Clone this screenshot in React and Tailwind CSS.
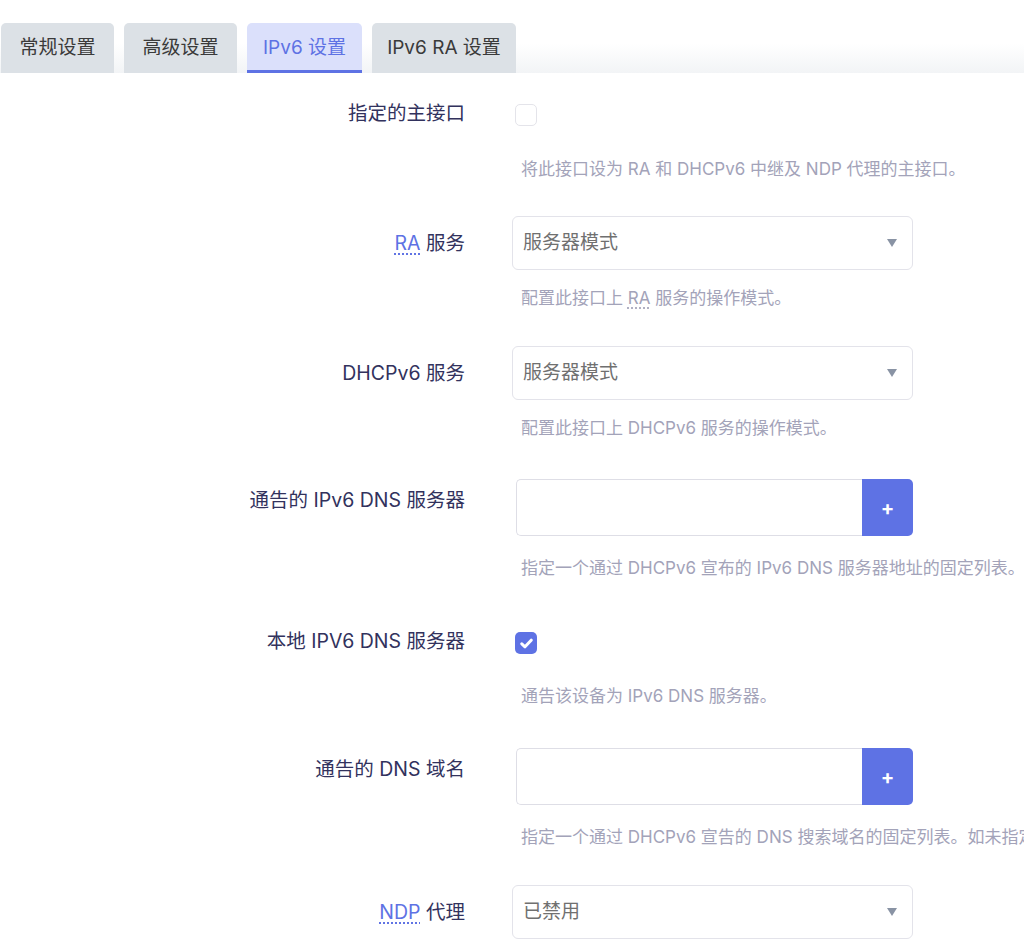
import React from "react";

const font = { fontFamily: 'Inter, "Noto Sans CJK SC", sans-serif' };

function Abbr({ children, muted }) {
  return muted ? (
    <span className="underline decoration-dotted decoration-[#a3a3b9] underline-offset-4">{children}</span>
  ) : (
    <span className="text-[#5e72e4] underline decoration-dotted decoration-[#5e72e4] underline-offset-4">
      {children}
    </span>
  );
}

function Label({ children, top }) {
  return (
    <div className={`w-[465px] shrink-0 text-right text-[19.5px] leading-6 text-[#32325d] ${top}`}>
      {children}
    </div>
  );
}

function Desc({ children, mt }) {
  return (
    <div className={`pl-[9px] text-[17px] leading-6 text-[#a3a3b9] whitespace-nowrap ${mt}`}>
      {children}
    </div>
  );
}

function Select({ value }) {
  return (
    <div className="flex h-[54px] w-[401px] items-center justify-between rounded-md border border-[#e3e3ea] bg-white pl-[10px] pr-[15px]">
      <span className="text-[19px] text-[#707070]">{value}</span>
      <svg width="10" height="8" viewBox="0 0 10 8">
        <path d="M0 0 H10 L5 8 Z" fill="#8993a4" />
      </svg>
    </div>
  );
}

function DynList() {
  return (
    <div className="ml-[4px] flex h-[57px] w-[397px]">
      <div className="flex-1 rounded-l-[5px] border border-r-0 border-[#dedee6] bg-white" />
      <button className="flex w-[51px] items-center justify-center rounded-r-[5px] bg-[#5e72e4] text-[20px] font-bold text-white">
        +
      </button>
    </div>
  );
}

function Checkbox({ checked }) {
  return checked ? (
    <div className="ml-[3px] flex h-[22px] w-[22px] items-center justify-center rounded-[5px] bg-[#5e72e4]">
      <svg width="13" height="11" viewBox="0 0 13 11">
        <path d="M1.8 5.8 L5 8.8 L11.2 2.2" stroke="white" strokeWidth="3" fill="none" strokeLinecap="round" strokeLinejoin="round" />
      </svg>
    </div>
  ) : (
    <div className="ml-[3px] h-[22px] w-[22px] rounded-[5px] border border-[#e4e4ea] bg-white" />
  );
}

const tabs = ["常规设置", "高级设置", "IPv6 设置", "IPv6 RA 设置"];

export default function App() {
  return (
    <div className="min-h-[949px] w-[1024px] overflow-hidden bg-white" style={font}>
      <div className="flex gap-[10px] bg-gradient-to-b from-white from-[60%] to-[#f2f4f6] pl-[1px] pt-[23px]">
        {tabs.map((t, i) =>
          i === 2 ? (
            <div
              key={t}
              className="flex h-[50px] w-[115px] items-center justify-center rounded-t-[5px] border-b-[3px] border-[#5e72e4] bg-[#dbe0fb] pt-[3px] text-[19px] text-[#5e72e4]"
            >
              {t}
            </div>
          ) : (
            <div
              key={t}
              className={`flex h-[50px] items-center justify-center rounded-t-[5px] bg-[#dce1e6] text-[19px] text-[#3a3a3a] ${i === 3 ? "w-[144px]" : "w-[113px]"}`}
            >
              {t}
            </div>
          )
        )}
      </div>

      {/* 指定的主接口 */}
      <div className="flex gap-[47px] pt-[31px]">
        <Label top="mt-[-3px]">指定的主接口</Label>
        <div>
          <Checkbox checked={false} />
          <Desc mt="mt-[31px]">将此接口设为 RA 和 DHCPv6 中继及 NDP 代理的主接口。</Desc>
        </div>
      </div>

      {/* RA 服务 */}
      <div className="flex gap-[47px] pt-[35px]">
        <Label top="pt-[15px]">
          <Abbr>RA</Abbr> 服务
        </Label>
        <div>
          <Select value="服务器模式" />
          <Desc mt="mt-[16px]">
            配置此接口上 <Abbr muted>RA</Abbr> 服务的操作模式。
          </Desc>
        </div>
      </div>

      {/* DHCPv6 服务 */}
      <div className="flex gap-[47px] pt-[36px]">
        <Label top="pt-[15px]">DHCPv6 服务</Label>
        <div>
          <Select value="服务器模式" />
          <Desc mt="mt-[16px]">配置此接口上 DHCPv6 服务的操作模式。</Desc>
        </div>
      </div>

      {/* 通告的 IPv6 DNS 服务器 */}
      <div className="flex gap-[47px] pt-[39px]">
        <Label top="pt-[9px]">通告的 IPv6 DNS 服务器</Label>
        <div>
          <DynList />
          <Desc mt="mt-[20px]">指定一个通过 DHCPv6 宣布的 IPv6 DNS 服务器地址的固定列表。如未指定，则设备将自身宣布为 IPv6 DNS 服务器。</Desc>
        </div>
      </div>

      {/* 本地 IPV6 DNS 服务器 */}
      <div className="flex gap-[47px] pt-[52px]">
        <Label top="mt-[-3px]">本地 IPV6 DNS 服务器</Label>
        <div>
          <Checkbox checked />
          <Desc mt="mt-[30px]">通告该设备为 IPv6 DNS 服务器。</Desc>
        </div>
      </div>

      {/* 通告的 DNS 域名 */}
      <div className="flex gap-[47px] pt-[40px]">
        <Label top="pt-[9px]">通告的 DNS 域名</Label>
        <div>
          <DynList />
          <Desc mt="mt-[20px]">指定一个通过 DHCPv6 宣告的 DNS 搜索域名的固定列表。如未指定，则使用本地域名。</Desc>
        </div>
      </div>

      {/* NDP 代理 */}
      <div className="flex gap-[47px] pt-[36px]">
        <Label top="pt-[15px]">
          <Abbr>NDP</Abbr> 代理
        </Label>
        <div>
          <Select value="已禁用" />
        </div>
      </div>
    </div>
  );
}
